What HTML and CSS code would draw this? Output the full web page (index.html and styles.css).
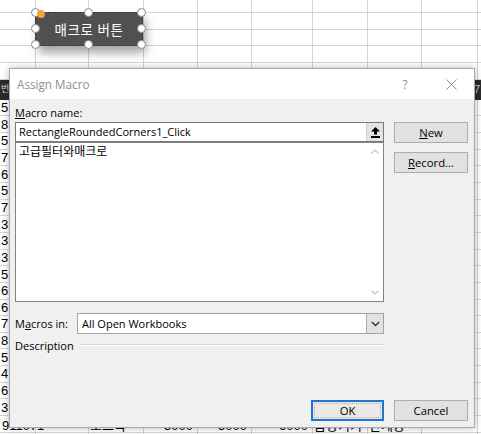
FILE: index.html
```html
<!DOCTYPE html>
<html lang="ko">
<head>
<meta charset="utf-8">
<title>Assign Macro</title>
<link rel="stylesheet" href="styles.css">
</head>
<body>
<div class="sheet">
  <div class="row r-top"></div>
  <div class="row"></div>
  <div class="row"></div>
  <div class="row"></div>
  <div class="row"></div>
  <div class="row hdr"><span class="c0">번</span><span class="hdr-end">7</span></div>
  <div class="row"><span class="c0">5</span></div>
  <div class="row"><span class="c0">8</span></div>
  <div class="row"><span class="c0">5</span></div>
  <div class="row"><span class="c0">7</span></div>
  <div class="row"><span class="c0">6</span></div>
  <div class="row"><span class="c0">5</span></div>
  <div class="row"><span class="c0">7</span></div>
  <div class="row"><span class="c0">3</span></div>
  <div class="row"><span class="c0">3</span></div>
  <div class="row"><span class="c0">3</span></div>
  <div class="row"><span class="c0">5</span></div>
  <div class="row"><span class="c0">6</span></div>
  <div class="row"><span class="c0">6</span></div>
  <div class="row"><span class="c0">7</span></div>
  <div class="row"><span class="c0">8</span></div>
  <div class="row"><span class="c0">5</span></div>
  <div class="row"><span class="c0">4</span></div>
  <div class="row"><span class="c0">6</span></div>
  <div class="row"><span class="c0">3</span></div>
  <div class="row last">
    <span class="cell">91107</span>
    <span class="cell">1</span>
    <span class="cell">노트북</span>
    <span class="cell num">5000</span>
    <span class="cell num">5000</span>
    <span class="cell num">6000</span>
    <span class="cell">음향기기</span>
    <span class="cell">단계등</span>
    <span class="cell"></span>
    <span class="cell"></span>
  </div>
</div>

<div class="shape">
  <span class="shape-text">매크로 버튼</span>
  <span class="handle h-tl"></span>
  <span class="handle h-tc"></span>
  <span class="handle h-tr"></span>
  <span class="handle h-ml"></span>
  <span class="handle h-mr"></span>
  <span class="handle h-bl"></span>
  <span class="handle h-bc"></span>
  <span class="handle h-br"></span>
  <span class="adjust"></span>
</div>

<div class="dialog">
  <div class="titlebar">
    <span class="title">Assign Macro</span>
    <span class="cap-btn help">?</span>
    <span class="cap-btn close">
      <svg width="11" height="11" viewBox="0 0 11 11"><path d="M0.5 0.5 L10.5 10.5 M10.5 0.5 L0.5 10.5" stroke="#8c8c8c" stroke-width="1" fill="none"/></svg>
    </span>
  </div>
  <div class="body">
    <div class="main">
      <div class="left">
        <div class="label"><u>M</u>acro name:</div>
        <div class="textbox">
          <span class="tb-text">RectangleRoundedCorners1_Click</span>
          <span class="tb-btn">
            <svg width="9" height="11" viewBox="0 0 9 11"><path d="M4.5 0 L9 4.5 L6 4.5 L6 7.5 L3 7.5 L3 4.5 L0 4.5 Z" fill="#000"/><rect x="0" y="9" width="9" height="2" fill="#000"/></svg>
          </span>
        </div>
        <div class="listbox">
          <div class="list-items">
            <div class="item">고급필터와매크로</div>
          </div>
          <div class="vscroll">
            <span class="sb-arrow">
              <svg width="8" height="5" viewBox="0 0 8 5"><path d="M0.5 4.5 L4 1 L7.5 4.5" stroke="#c4c4c4" stroke-width="1.2" fill="none"/></svg>
            </span>
            <span class="sb-arrow">
              <svg width="8" height="5" viewBox="0 0 8 5"><path d="M0.5 0.5 L4 4 L7.5 0.5" stroke="#c4c4c4" stroke-width="1.2" fill="none"/></svg>
            </span>
          </div>
        </div>
        <div class="combo-row">
          <span class="combo-label">M<u>a</u>cros in:</span>
          <div class="combo">
            <span class="combo-text">All Open Workbooks</span>
            <span class="combo-btn">
              <svg width="9" height="6" viewBox="0 0 9 6"><path d="M0.8 1 L4.5 4.6 L8.2 1" stroke="#333" stroke-width="1.4" fill="none"/></svg>
            </span>
          </div>
        </div>
        <div class="desc-row">
          <span>Description</span>
          <span class="desc-line"></span>
        </div>
      </div>
      <div class="right">
        <button class="btn"><u>N</u>ew</button>
        <button class="btn"><u>R</u>ecord...</button>
      </div>
    </div>
    <div class="footer">
      <button class="btn ok"><span class="focus">OK</span></button>
      <button class="btn">Cancel</button>
    </div>
  </div>
</div>
</body>
</html>
```

FILE: styles.css
```css
html, body {
  margin: 0;
  padding: 0;
}
body {
  width: 481px;
  height: 434px;
  overflow: hidden;
  position: relative;
  background: #fff;
  font-family: "Open Sans", "Noto Sans CJK KR", sans-serif;
}

/* spreadsheet canvas */
.sheet {
  height: 434px;
  display: flex;
  flex-direction: column;
  background-image: linear-gradient(to right,
    transparent 35px, #d4d4d4 35px 36px,
    transparent 36px 88px, #d4d4d4 88px 89px,
    transparent 89px 143px, #d4d4d4 143px 144px,
    transparent 144px 197px, #d4d4d4 197px 198px,
    transparent 198px 251px, #d4d4d4 251px 252px,
    transparent 252px 312px, #d4d4d4 312px 313px,
    transparent 313px 367px, #d4d4d4 367px 368px,
    transparent 368px 421px, #d4d4d4 421px 422px,
    transparent 422px 477px, #d4d4d4 477px 478px,
    transparent 478px);
  font-family: "Liberation Sans", "Noto Sans CJK KR", sans-serif;
  font-size: 13px;
  color: #000;
}
.row {
  flex: none;
  box-sizing: border-box;
  height: 16.67px;
  border-bottom: 1px solid #d4d4d4;
  display: flex;
  align-items: center;
  line-height: 15px;
  white-space: nowrap;
  overflow: hidden;
}
.r-top { height: 13px; }
.hdr {
  height: 20px;
  background: #2b2b2b;
  color: #ddd;
  border-bottom-color: #2b2b2b;
  justify-content: space-between;
}
.c0 {
  width: 8px;
  padding-left: 1px;
  overflow: hidden;
}
.hdr .c0 { font-size: 9px; }
.hdr-end { font-size: 11px; color: #ccc; padding-right: 1px; }
.last {
  display: grid;
  grid-template-columns: 35px 53px 55px 54px 54px 61px 55px 54px 56px 4px;
  align-items: start;
  padding-top: 2px;
}
.cell {
  padding-left: 2px;
  overflow: hidden;
}
.cell.num {
  text-align: right;
  padding-right: 4px;
}

/* selected shape (floating object) */
.shape {
  position: absolute;
  left: 35px;
  top: 12px;
  width: 108px;
  height: 34px;
  box-sizing: border-box;
  background: #505050;
  border: 1px dashed #3a3a3a;
  border-radius: 3px;
  box-shadow: 3px 7px 10px rgba(0, 0, 0, 0.35);
  display: flex;
  align-items: center;
  justify-content: center;
}
.shape-text {
  color: #fff;
  font-family: "Noto Sans CJK KR", sans-serif;
  font-size: 13.5px;
  letter-spacing: 0.5px;
}
.handle {
  position: absolute;
  width: 9px;
  height: 9px;
  box-sizing: border-box;
  border-radius: 50%;
  background: #fff;
  border: 1px solid #8a8a8a;
  margin-left: -5px;
  margin-top: -5px;
}
.h-tl { left: 0; top: 0; }
.h-tc { left: 50%; top: 0; }
.h-tr { left: 100%; top: 0; }
.h-ml { left: 0; top: 50%; }
.h-mr { left: 100%; top: 50%; }
.h-bl { left: 0; top: 100%; }
.h-bc { left: 50%; top: 100%; }
.h-br { left: 100%; top: 100%; }
.adjust {
  position: absolute;
  left: 1px;
  top: -3px;
  width: 8px;
  height: 8px;
  border-radius: 50%;
  background: #f3a53a;
}

/* dialog */
.dialog {
  position: absolute;
  left: 9px;
  top: 68px;
  width: 466px;
  height: 360px;
  box-sizing: border-box;
  border: 1px solid #a9a9a9;
  box-shadow: 0 0 7px rgba(0, 0, 0, 0.28);
  display: flex;
  flex-direction: column;
  font-size: 11px;
  color: #000;
}
.titlebar {
  height: 30px;
  flex: none;
  background: #fff;
  display: flex;
  align-items: center;
  padding-left: 7px;
}
.title {
  flex: 1;
  color: #8f8f8f;
  font-size: 11.7px;
}
.cap-btn {
  width: 46px;
  height: 30px;
  display: flex;
  align-items: center;
  justify-content: center;
  color: #8c8c8c;
  font-size: 12px;
}
.body {
  flex: 1;
  background: #f0f0f0;
  display: flex;
  flex-direction: column;
  padding: 5px 6px 6px 5px;
}
.main {
  flex: 1;
  display: flex;
  gap: 10px;
}
.left {
  width: 369px;
  display: flex;
  flex-direction: column;
}
.label {
  height: 18px;
  line-height: 17px;
}
.textbox {
  height: 20px;
  box-sizing: border-box;
  border: 1px solid #7a7a7a;
  background: #fff;
  display: flex;
  align-items: stretch;
}
.tb-text {
  flex: 1;
  padding-left: 3px;
  line-height: 18px;
}
.tb-btn {
  width: 16px;
  background: #e4e4e4;
  border-left: 1px solid #cdcdcd;
  display: flex;
  align-items: center;
  justify-content: center;
}
.listbox {
  height: 160px;
  box-sizing: border-box;
  border: 1px solid #828282;
  background: #fff;
  display: flex;
}
.list-items {
  flex: 1;
  padding-left: 3px;
}
.item {
  font-family: "Noto Sans CJK KR", sans-serif;
  font-size: 12px;
  line-height: 15px;
}
.vscroll {
  width: 17px;
  display: flex;
  flex-direction: column;
  justify-content: space-between;
}
.sb-arrow {
  height: 17px;
  display: flex;
  align-items: center;
  justify-content: center;
}
.combo-row {
  margin-top: 11px;
  display: flex;
  align-items: center;
  height: 21px;
}
.combo-label {
  width: 62px;
  flex: none;
}
.combo {
  flex: 1;
  height: 21px;
  box-sizing: border-box;
  border: 1px solid #a3a3a3;
  background: #fff;
  display: flex;
}
.combo-text {
  flex: 1;
  padding-left: 4px;
  line-height: 19px;
}
.combo-btn {
  width: 16px;
  background: #e2e2e2;
  border-left: 1px solid #acacac;
  display: flex;
  align-items: center;
  justify-content: center;
}
.desc-row {
  margin-top: 3px;
  height: 16px;
  display: flex;
  align-items: center;
}
.desc-line {
  flex: 1;
  margin-left: 6px;
  border-top: 1px solid #d9d9d9;
  border-bottom: 1px solid #fff;
}
.right {
  width: 74px;
  display: flex;
  flex-direction: column;
  gap: 9px;
  padding-top: 18px;
}
.btn {
  width: 74px;
  height: 21px;
  box-sizing: border-box;
  padding: 0;
  background: #e1e1e1;
  border: 1px solid #adadad;
  font-family: "Open Sans", sans-serif;
  font-size: 11.3px;
  color: #000;
  line-height: 17px;
}
.footer {
  flex: none;
  display: flex;
  justify-content: flex-end;
  gap: 10px;
}
.btn.ok {
  width: 73px;
  border: 2px solid #1a78d4;
  background: #ebe8e5;
  padding: 1px;
  display: flex;
}
.focus {
  flex: 1;
  border: 1px dotted #d4a688;
  line-height: 13px;
}
```
